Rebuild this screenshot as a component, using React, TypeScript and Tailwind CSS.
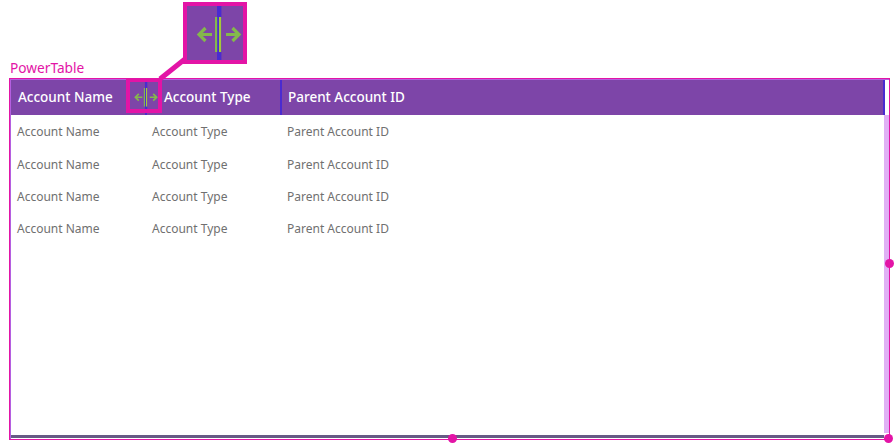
const RowData = [1, 2, 3, 4];

// resize handle glyph, same drawing for the small handle and the magnified one
const ResizeIcon = ({ className }: { className: string }) => (
  <svg viewBox="0 0 64 60" className={className} fill="none">
    <rect x="30" y="0" width="4.4" height="60" fill="#4a2bd0" />
    <rect x="28" y="13" width="2.2" height="35" fill="#84b84c" />
    <rect x="32" y="13" width="2.2" height="35" fill="#a6c83a" />
    <path d="M25 30.5H12M18.5 24l-6.5 6.5 6.5 6.5" stroke="#84b84c" strokeWidth="3.2" />
    <path d="M39 30.5h13M45.5 24l6.5 6.5-6.5 6.5" stroke="#84b84c" strokeWidth="3.2" />
  </svg>
);

const Dot = ({ className }: { className: string }) => (
  <span className={`absolute w-[9px] h-[9px] rounded-full bg-[#e314a6] ${className}`} />
);

export default function App() {
  return (
    <div className="relative w-[896px] h-[448px] overflow-hidden bg-white font-['Noto_Sans','Open_Sans',sans-serif]">
      <div className="pt-[58px] pl-[10px] text-[13.7px] leading-[19px] text-[#e314a6]">PowerTable</div>

      <div className="ml-[9px] mt-[1px] w-[881px] h-[362px] border border-[#e314a6]">
        <div className="flex flex-col h-full border-l border-t border-[#b45fe0]">
          <div className="flex h-[35px] w-[874px] bg-[#7d45a8] text-white text-[13.5px] font-medium border-r-2 border-[#4a2bd0]">
            <div className="w-[136px] pl-[7px] flex items-center border-r-2 border-[#4a2bd0]">Account Name</div>
            <div className="w-[135px] pl-[17px] flex items-center border-r-2 border-[#4a2bd0]">Account Type</div>
            <div className="flex-1 pl-[6px] flex items-center">Parent Account ID</div>
          </div>

          <div className="flex flex-1 min-h-0">
            <div className="flex-1 pt-[1.4px] text-[12px] text-[#707070]">
              {RowData.map((id) => (
                <div key={id} className="flex h-[32.2px] items-center pl-[6px]">
                  <div className="w-[135px]">Account Name</div>
                  <div className="w-[135px]">Account Type</div>
                  <div>Parent Account ID</div>
                </div>
              ))}
            </div>
            <div className="w-[5px] mb-[2px] bg-[#e0b0f5]" />
          </div>

          <div className="h-[3px] mr-[5px] bg-[#675a85]" />
          <div className="h-[1px]" />
        </div>
      </div>

      {/* magnified handle and its connector */}
      <svg className="absolute left-[155px] top-[55px] w-[35px] h-[30px]" viewBox="0 0 35 30" fill="none">
        <path d="M30 4L5 24" stroke="#e314a6" strokeWidth="5" />
      </svg>
      <div className="absolute left-[183px] top-[2px] w-[64px] h-[62px] overflow-hidden border-4 border-[#e314a6] bg-[#7d45a8]">
        <ResizeIcon className="absolute left-0 top-[-2px] w-[64px] h-[60px]" />
      </div>
      <div className="absolute left-[126px] top-[78px] w-[36px] h-[35px] overflow-hidden border-4 border-[#e314a6] bg-[#7d45a8]">
        <ResizeIcon className="absolute left-[-1px] top-[-1px] w-[34px] h-[32px]" />
      </div>

      <Dot className="left-[885px] top-[259px]" />
      <Dot className="left-[448px] top-[434px]" />
      <Dot className="left-[884px] top-[434px]" />
    </div>
  );
}
